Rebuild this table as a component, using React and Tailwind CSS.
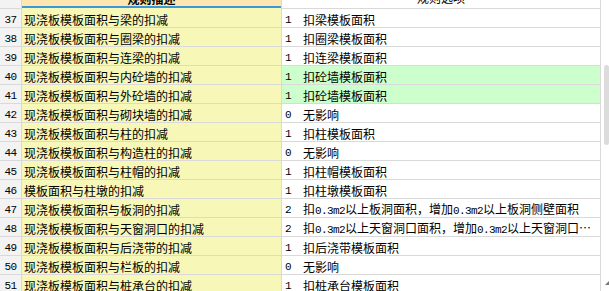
import React from "react";

const rows = [
  [37, "现浇板模板面积与梁的扣减", "1", "扣梁模板面积", false],
  [38, "现浇板模板面积与圈梁的扣减", "1", "扣圈梁模板面积", false],
  [39, "现浇板模板面积与连梁的扣减", "1", "扣连梁模板面积", false],
  [40, "现浇板模板面积与内砼墙的扣减", "1", "扣砼墙模板面积", true],
  [41, "现浇板模板面积与外砼墙的扣减", "1", "扣砼墙模板面积", true],
  [42, "现浇板模板面积与砌块墙的扣减", "0", "无影响", false],
  [43, "现浇板模板面积与柱的扣减", "1", "扣柱模板面积", false],
  [44, "现浇板模板面积与构造柱的扣减", "0", "无影响", false],
  [45, "现浇板模板面积与柱帽的扣减", "1", "扣柱帽模板面积", false],
  [46, "模板面积与柱墩的扣减", "1", "扣柱墩模板面积", false],
  [47, "现浇板模板面积与板洞的扣减", "2", "扣0.3m2以上板洞面积，增加0.3m2以上板洞侧壁面积", false],
  [48, "现浇板模板面积与天窗洞口的扣减", "2", "扣0.3m2以上天窗洞口面积，增加0.3m2以上天窗洞口…", false],
  [49, "现浇板模板面积与后浇带的扣减", "1", "扣后浇带模板面积", false],
  [50, "现浇板模板面积与栏板的扣减", "0", "无影响", false],
  [51, "现浇板模板面积与桩承台的扣减", "1", "扣桩承台模板面积", false],
];

function Mixed({ text }) {
  const parts = text.split(/([0-9.a-z]+)/);
  return (
    <>
      {parts.map((p, i) =>
        /^[0-9.a-z]+$/.test(p) ? (
          <span key={i} className="font-['Liberation_Mono',monospace] text-[11px] tracking-[-0.6px]">
            {p}
          </span>
        ) : (
          <span key={i}>{p}</span>
        )
      )}
    </>
  );
}

export default function App() {
  return (
    <div className="relative w-[609px] h-[291px] overflow-hidden bg-white text-black text-[12px] leading-[12px] font-['Noto_Sans_CJK_SC',sans-serif]">
      <div className="w-[601px] flex flex-col">
        {/* header */}
        <div className="flex h-[9px]">
          <div className="w-[22px] h-[9px] bg-[#f3f3f3] border-r border-b border-[#d9d9d9]" />
          <div className="w-[260px] h-[9px] flex flex-col border-r border-[#d9d9d9]">
            <div className="h-[6px] bg-[#fde6b0] overflow-hidden flex justify-center">
              <div className="mt-[-7px] h-[12px] font-bold whitespace-nowrap">规则描述</div>
            </div>
            <div className="h-[2px] bg-[#3a9ad9]" />
            <div className="h-[1px] bg-[#f7f7b8]" />
          </div>
          <div className="w-[319px] h-[9px] border-r border-b border-[#d9d9d9] overflow-hidden flex justify-center">
            <div className="mt-[-8px] h-[12px] whitespace-nowrap">规则选项</div>
          </div>
        </div>
        {rows.map(([n, desc, v, opt, green]) => (
          <div key={n} className="flex h-[19px] border-b border-[#d9d9d9]">
            <div className="w-[22px] bg-[#f3f3f3] border-r border-[#d9d9d9] flex items-center justify-center pt-[3px] font-['Liberation_Mono',monospace] text-[11px] tracking-[-0.6px]">
              {n}
            </div>
            <div className="w-[260px] bg-[#f7f7b8] border-r border-[#d9d9d9] flex items-center pl-[2px] pt-[3px] whitespace-nowrap">
              {desc}
            </div>
            <div
              className={`w-[319px] border-r border-[#d9d9d9] flex items-center pt-[3px] whitespace-nowrap overflow-hidden ${
                green ? "bg-[#ccffcc]" : "bg-white"
              }`}
            >
              <div className="w-[21px] pl-[3px] font-['Liberation_Mono',monospace] text-[11px]">{v}</div>
              <div className="whitespace-nowrap">
                <Mixed text={opt} />
              </div>
            </div>
          </div>
        ))}
      </div>
      {/* scrollbar thumb */}
      <div className="absolute left-[604px] top-[65px] w-[5px] h-[80px] rounded-[3px] bg-[#dcdcdc]" />
      {/* resize grip */}
      <div className="absolute left-[605px] top-[281px] w-0 h-0 border-l-[4px] border-l-transparent border-b-[4px] border-b-[#777]" />
    </div>
  );
}
